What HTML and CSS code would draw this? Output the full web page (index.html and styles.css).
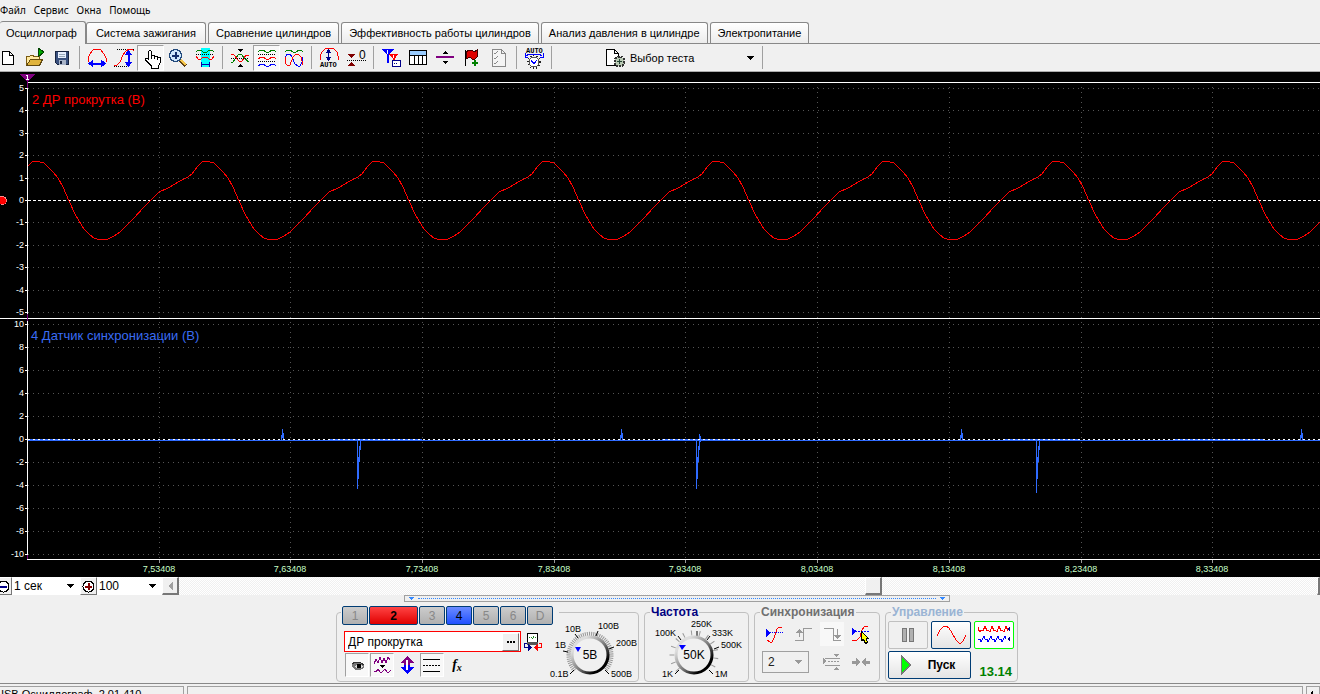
FILE: index.html
```html
<!DOCTYPE html>
<html lang="ru">
<head>
<meta charset="utf-8">
<title>USB Осциллограф</title>
<link rel="stylesheet" href="styles.css">
</head>
<body>
<div class="app">
  <nav class="menu">
    <button>Файл</button><button>Сервис</button><button>Окна</button><button>Помощь</button>
  </nav>

  <div class="tabs" role="tablist">
    <button class="tab active" role="tab" aria-selected="true">Осциллограф</button>
    <button class="tab" role="tab">Система зажигания</button>
    <button class="tab" role="tab">Сравнение цилиндров</button>
    <button class="tab" role="tab">Эффективность работы цилиндров</button>
    <button class="tab" role="tab">Анализ давления в цилиндре</button>
    <button class="tab" role="tab">Электропитание</button>
  </div>

  <div class="toolbar">
    <button class="tool" aria-label="Новый"><svg width="20" height="20"><path d="M4.5 3.5h7l4 4v9h-11zM11.5 3.500v4h4" fill="#fff" stroke="#000"/></svg></button>
    <button class="tool" aria-label="Открыть"><svg width="20" height="20"><path d="M1.500 17V8.500h3l1-1h3v1h6v3" fill="#ffe9a0" stroke="#7a5a10"/><path d="M1.500 17.500l4-6h12l-3 6z" fill="#e0b33c" stroke="#604810"/><path d="M13 0v9l6-5z" fill="#0a0" stroke="#040"/></svg></button>
    <button class="tool" aria-label="Сохранить"><svg width="20" height="20"><path d="M3.500 3.500h13v13h-11l-2-2z" fill="#39507e" stroke="#172440"/><path d="M6 4h8v6H6z" fill="#e8f0ff"/><path d="M7 6h6M7 8h6" stroke="#9ab"/><path d="M7 12h7v5H7z" fill="#a9b4c8"/><path d="M8 13h2v3H8z" fill="#172440"/></svg></button>
    <span class="sep"></span>
    <button class="tool" aria-label="Период"><svg width="20" height="20"><path d="M1 14V10l2-4 3-4 2-1h4l2 1 3 4 2 4v4" fill="none" stroke="red"/><path d="M3 15.500h14" stroke="#00f" stroke-width="2"/><path d="M1 15.500l5-4v8zM19 15.500l-5-4v8z" fill="#00f"/></svg></button>
    <button class="tool" aria-label="Амплитуда"><svg width="20" height="20"><path d="M3 1.500h17M0 18.500h15" stroke="#000" stroke-dasharray="1 1"/><path d="M0 17h3l3-3 3-7 3-4 3-2h3l2 2" fill="none" stroke="red"/><path d="M14.500 5v11" stroke="#00f" stroke-width="2"/><path d="M14.500 2l-4 5h8zM14.500 19l-4-5h8z" fill="#00f"/></svg></button>
    <button class="tool pressed" aria-label="Рука"><svg width="20" height="20"><path d="M7.500 12V3.500l1-1h1l1 1V8l1-1h1l1 1v1l1-1h1l1 1v1l1-1h1l1 1v4l-2 4v2h-7v-2l-6-6v-2h2z" fill="#fff" stroke="#000"/><path d="M10.500 8v3M13.500 9v2M16.500 10v2" stroke="#000"/></svg></button>
    <button class="tool" aria-label="Лупа"><svg width="20" height="20"><path d="M12 12l6 6" stroke="#604010" stroke-width="4"/><path d="M13 12l5 5" stroke="#f5c64a" stroke-width="2"/><circle cx="7.500" cy="7.500" r="6" fill="#cfe8fb" stroke="#234a7c" stroke-width="1.500"/><path d="M4 7.500h7M7.500 4v7" stroke="#13306c" stroke-width="2"/></svg></button>
    <button class="tool" aria-label="Участок"><svg width="20" height="20"><path d="M6 0h9v19H6z" fill="#0ff"/><path d="M1 4l2-2h3l2 2h4l2-2h3l2 2" fill="none" stroke="green"/><path d="M1 6.500h18" stroke="#000" stroke-dasharray="1 1"/><path d="M1 8l2 3h3l2-2h4l2 2h3l2-3" fill="none" stroke="red"/><path d="M6 16.500h9M6.500 14v5M14.500 14v5" stroke="#00a"/></svg></button>
    <span class="sep"></span>
    <button class="tool" aria-label="Совместить"><svg width="20" height="20"><path d="M1 14h2l5-7 3-1 4 5 4 3" fill="none" stroke="green"/><path d="M1 6l3 1 5 6h3l4-6h3" fill="none" stroke="red"/><path d="M1 10.500h18" stroke="#000" stroke-dasharray="1 1"/><path d="M7 1h6l-3 3zM7 19h6l-3-3z"/></svg></button>
    <button class="tool pressed" aria-label="Разделить"><svg width="20" height="20"><g fill="none"><path d="M1 4l2-2h3l3 2h3l3-2h2l2 2" stroke="green"/><path d="M1 11l3-2h2l3 2h3l3-2h2l2 2" stroke="red"/><path d="M1 18l3-2h2l3 2h3l3-2h2l2 2" stroke="#00f"/></g><path d="M1 6.500h18M1 13.500h18" stroke="#000" stroke-dasharray="1 1"/></svg></button>
    <button class="tool" aria-label="Наложить"><svg width="20" height="20"><g fill="none"><path d="M1 4l2-2h3l3 2h3l3-2h2l2 2" stroke="green"/><path d="M1 15v-5l2-4h3l2 3 3 7 3 2h2l2-4v-5" stroke="#00f"/><path d="M1 9v6l2 2h3l3-8 3-3h2l3 3 2 8" stroke="red"/></g></svg></button>
    <span class="sep"></span>
    <button class="tool" aria-label="Автомасштаб"><svg width="20" height="20"><path d="M1 12V8l2-4 3-3 3-1h3l3 1 3 3 1 4v4" fill="none" stroke="red"/><path d="M9.500 3v8" stroke="#008"/><path d="M9.500 1l-3 4h6zM9.500 13l-3-4h6z" fill="#008"/><text class="mini" x="1" y="19">AUTO</text></svg></button>
    <button class="tool" aria-label="Ноль"><svg width="20" height="20"><path d="M2 6h7l-3.500 4zM2 18h7l-3.500-4z" fill="#800000"/><path d="M1 12.500h19" stroke="#000" stroke-dasharray="1 1"/><text class="zero" x="13" y="11">0</text></svg></button>
    <span class="sep"></span>
    <button class="tool" aria-label="Маркеры"><svg width="20" height="20"><path d="M0 1h13l-5 6v8H6V7z" fill="#00f"/><path d="M8 6h9l-3 5v5h-2v-5z" fill="red"/><path d="M6.500 2v4M12.500 7v3" stroke="#fff"/><path d="M11.500 12.500h8v6h-8z" fill="#fff" stroke="#008"/><path d="M13 15.500h4" stroke="#008" stroke-dasharray="1 1"/></svg></button>
    <button class="tool" aria-label="Таблица"><svg width="20" height="20"><path d="M1.500 2.500h17v14h-17z" fill="#fff" stroke="#000"/><path d="M2 3h16v4H2z" fill="#9cf"/><path d="M1 7.500h18M6.500 7v9M10.500 7v9M14.500 7v9" stroke="#000"/></svg></button>
    <button class="tool" aria-label="Линия"><svg width="20" height="20"><path d="M1 9h18" stroke="#800080" stroke-width="2"/><path d="M7 6l3-3 3 3zM7 13l3 3 3-3z"/></svg></button>
    <button class="tool" aria-label="Метка"><svg width="20" height="20"><path d="M3.500 2v16" stroke="#000"/><path d="M4 4l3-2h3l2 2 3-2v7l-2 2h-3l-2-2-4 2z" fill="#e00000" stroke="#400"/><path d="M10 15h6M13 12v6" stroke="green" stroke-width="2"/></svg></button>
    <button class="tool" aria-label="Отчёт"><svg width="20" height="20"><path d="M3.500 1.500h9l4 4v13h-13zM12.500 1.500v4h4" fill="#f4f4f4" stroke="#888"/><path d="M5 5l1 1 3-3M5 10l1 1 3-3M5 15l1 1 3-3" fill="none" stroke="#888"/></svg></button>
    <span class="sep"></span>
    <button class="tool" aria-label="Авто"><svg width="20" height="22"><text class="mini" x="2" y="6">AUTO</text><path d="M2 9l3-2h10l3 2M1 6v4h3M19 6v4h-3" fill="none" stroke="#00f"/><circle cx="10" cy="15" r="6" fill="none" stroke="#222" stroke-width="2" stroke-dasharray="1 2"/><circle cx="10" cy="15" r="5" fill="#fff" stroke="#555"/><path d="M7 13l3 4 3-4" fill="none" stroke="#00f"/></svg></button>
    <span class="sep"></span>
    <button class="test"><svg width="20" height="20"><path d="M.5 1.500h8l4 4v12H.5zM8.500 1.500v4h4" fill="#fff" stroke="#000"/><circle cx="13.500" cy="13.500" r="5" fill="#b9c9b4" stroke="#333" stroke-width="2" stroke-dasharray="2 1"/><path d="M11 13.500h5M13.500 11v5" stroke="#243"/></svg><span>Выбор теста</span><svg class="drop" width="7" height="4"><path d="M0 0h7L3.500 4z"/></svg></button>
    <span class="sep"></span>
  </div>

  <main class="scope">
    <svg class="plot" width="100%" height="505" role="img" aria-label="Осциллограмма">
      <defs>
        <path id="period" d="M28 166L32 162L35 161H39L40 162H43L47 166L53 172L58 178L63 187L69 201L76 216L84 229L90 235L94 238L98 239.500H107L114 236L120 232L133 219L145 206L152 199L159 192L168 188L180 181L188 177L192 174L198 166"/>
        <path id="up" d="M0 438v-9M1 440v-7M-1 440v-5"/>
        <path id="down" d="M0 440v49M1 457v22M2 446v16M3 440v10"/>
      </defs>
      <g transform="translate(0 -72)">
        <g class="grid">
          <path d="M28 88.500h3000M28 110.500h3000M28 133.500h3000M28 155.500h3000M28 178.500h3000M28 222.500h3000M28 245.500h3000M28 267.500h3000M28 290.500h3000M28 312.500h3000"/>
          <path d="M28 324.500h3000M28 347.500h3000M28 370.500h3000M28 393.500h3000M28 416.500h3000M28 462.500h3000M28 485.500h3000M28 508.500h3000M28 531.500h3000M28 554.500h3000"/>
          <path d="M159.500 87v471M290.500 87v471M422.500 87v471M554.500 87v471M685.500 87v471M817.500 87v471M949.500 87v471M1081.500 87v471M1212.500 87v471"/>
        </g>
        <path class="axis" d="M27 82.500h3000M0 318.500h3000M27 559.500h3000M27.500 88v471M25 88.500h3M25 110.500h3M25 133.500h3M25 155.500h3M25 178.500h3M25 200.500h3M25 222.500h3M25 245.500h3M25 267.500h3M25 290.500h3M25 312.500h3M25 324.500h3M25 347.500h3M25 370.500h3M25 393.500h3M25 416.500h3M25 439.500h3M25 462.500h3M25 485.500h3M25 508.500h3M25 531.500h3M25 554.500h3"/>
        <path class="tick" d="M159.500 560v3M290.500 560v3M422.500 560v3M554.500 560v3M685.500 560v3M817.500 560v3M949.500 560v3M1081.500 560v3M1212.500 560v3"/>
        <path class="cursor" d="M27.500 80v8M27.500 314v7M27.500 555v4"/>
        <path d="M20 74h15l-7.500 8z" fill="#800080"/>
        <path d="M26 75.500h1.500v4M26 79.500h3" fill="none" stroke="#fff"/>
        <path class="zero-line" d="M28 200.500h3000"/>
        <g class="wave">
          <use href="#period"/><use href="#period" x="170"/><use href="#period" x="340"/><use href="#period" x="510"/><use href="#period" x="680"/><use href="#period" x="850"/><use href="#period" x="1020"/><use href="#period" x="1190"/>
        </g>
        <circle cx="2.500" cy="200.500" r="4" fill="red" stroke="#f88"/>
        <g class="pulse">
          <path d="M28 440.500h3000M28 439.500h44M170 439.500h66M330 439.500h92M662 439.500h78M1005 439.500h75M1174 439.500h90"/>
          <use href="#up" x="282.500"/><use href="#up" x="621.500"/><use href="#up" x="961.500"/><use href="#up" x="1301.500"/>
          <use href="#down" x="357.500"/><use href="#down" x="696.500"/><use href="#down" x="1036.500"/>
          <path d="M699.500 434v14M700.500 436v6M1036.500 488v5"/>
        </g>
        <path class="zero-line low" d="M28 439.500h3000"/>
        <g class="scale">
          <text x="24" y="91">5</text><text x="24" y="113">4</text><text x="24" y="136">3</text><text x="24" y="158">2</text><text x="24" y="181">1</text><text x="24" y="203">0</text><text x="24" y="225">-1</text><text x="24" y="248">-2</text><text x="24" y="270">-3</text><text x="24" y="293">-4</text><text x="24" y="315">-5</text>
          <text x="24" y="327">10</text><text x="24" y="350">8</text><text x="24" y="373">6</text><text x="24" y="396">4</text><text x="24" y="419">2</text><text x="24" y="442">0</text><text x="24" y="465">-2</text><text x="24" y="488">-4</text><text x="24" y="511">-6</text><text x="24" y="534">-8</text><text x="24" y="557">-10</text>
        </g>
        <g class="times">
          <text x="159" y="572">7,53408</text><text x="290" y="572">7,63408</text><text x="422" y="572">7,73408</text><text x="554" y="572">7,83408</text><text x="685" y="572">7,93408</text><text x="817" y="572">8,03408</text><text x="949" y="572">8,13408</text><text x="1081" y="572">8,23408</text><text x="1212" y="572">8,33408</text>
        </g>
        <text class="name red" x="32" y="104">2 ДР прокрутка (В)</text>
        <text class="name blue" x="31" y="340">4 Датчик синхронизации (В)</text>
      </g>
    </svg>
  </main>

  <div class="zoombar">
    <button class="zoombtn" aria-label="Сжать"><svg width="13" height="13"><circle cx="6.500" cy="6.500" r="5.500" fill="#fff" stroke="#000"/><path d="M3 6.500h7" stroke="#008" stroke-width="2"/></svg></button>
    <span class="combo time"><select aria-label="Развертка"><option>1 сек</option></select><svg width="7" height="4"><path d="M0 0h7L3.500 4z"/></svg></span>
    <button class="zoombtn" aria-label="Растянуть"><svg width="13" height="13"><circle cx="6.500" cy="6.500" r="5.500" fill="#fff" stroke="#000"/><path d="M3 6.500h7M6.500 3v7" stroke="#800000" stroke-width="2"/></svg></button>
    <span class="combo percent"><select aria-label="Масштаб"><option>100</option></select><svg width="7" height="4"><path d="M0 0h7L3.500 4z"/></svg></span>
    <div class="scroll">
      <button class="raised" aria-label="Влево"><svg width="5" height="8"><path d="M5 0v8L0 4z" fill="#a0a0a0"/></svg></button>
      <span class="track before"></span><button class="raised" aria-label="Ползунок"></button><span class="track after"></span>
      <span class="raised end"></span>
    </div>
  </div>

  <div class="dock">
    <button class="splitter" aria-label="Свернуть панель"><svg width="5" height="3"><path d="M0 0h5L2.500 3z"/></svg><span></span><svg width="5" height="3"><path d="M0 0h5L2.500 3z"/></svg></button>

    <div class="groups">
      <fieldset class="group channel">
        <legend class="channels">
          <button>1</button><button class="on red">2</button><button>3</button><button class="on blue">4</button><button>5</button><button>6</button><button>D</button>
        </legend>
        <div class="settings">
          <div class="row">
            <span class="field"><input type="text" value="ДР прокрутка" aria-label="Имя канала"><button aria-label="Выбрать"><svg width="8" height="2"><path d="M0 0h2v2H0zM3 0h2v2H3zM6 0h2v2H6z"/></svg></button></span>
            <button class="flat" aria-label="Сменить прибор"><svg width="18" height="18"><path d="M3.500.5h10v9h-10z" fill="#fff" stroke="#000"/><path d="M3 9h11v3H3z" fill="#555"/><path d="M5 4.500h7M8 6l2-3" stroke="#282" stroke-dasharray="1 1"/><path d="M3 10.500H.500v4H5" fill="none" stroke="#008"/><path d="M4 11v7l4-3.500z" fill="#008"/><path d="M15 10.500h2.500v4H13" fill="none" stroke="red"/><path d="M14 11v7l-4-3.500z" fill="red"/></svg></button>
          </div>
          <div class="row icons">
            <button class="flat pressed" aria-label="Видимость"><svg width="18" height="18"><path d="M4 8l3-2h5l4 3v3l-4 2H7l-3-3z" fill="#777"/><path d="M4 8l3-2h5l4 3" fill="none" stroke="#333"/><path d="M6 11l3-2h5l1 2-3 1H9z" fill="#ddd"/><path d="M9 8h4v4H9z" fill="#000"/></svg></button>
            <button class="flat pressed" aria-label="Фильтр"><svg width="18" height="18"><path d="M1 5v3l2-5 2 4 2-6 2 6 2-5 2 5 2-6 2 3" fill="none" stroke="#800080"/><path d="M6 9h6l-3 3z"/><path d="M1 15l2 1 2-3 2 3h2l3-3 2 3h2l2-2" fill="none" stroke="#800080"/></svg></button>
            <button class="flat" aria-label="Инверсия"><svg width="18" height="18"><path d="M9 0l7 7h-4v2H6V7H2z" fill="#800080"/><path d="M9 18l7-7h-4V9H6v2H2z" fill="#00f"/><path d="M9 4v10" stroke="#fff" stroke-width="2"/></svg></button>
            <button class="flat pressed" aria-label="Уровни"><svg width="18" height="18"><path d="M0 3.500h17M0 15.500h17" stroke="#000"/><path d="M0 9.500h17" stroke="#000" stroke-dasharray="2 1"/></svg></button>
            <button class="flat fx">f<span>x</span></button>
          </div>
        </div>
        <svg class="knob" width="92" height="66">
          <defs><linearGradient id="rim" x1="0" y1="0" x2="1" y2="1"><stop offset=".2" stop-color="#ddd"/><stop offset=".55" stop-color="#777"/><stop offset=".8" stop-color="#000"/></linearGradient></defs>
          <path d="M26 54A21 21 0 1 1 56 54" fill="none" stroke="#999" stroke-width="5" stroke-dasharray="1 1"/>
          <path d="M25 54l-4 4M19 36l-5-1M29 22l-3-4M47 20l2-5M60 33l5-2M56 54l4 4" stroke="#000"/>
          <circle cx="41" cy="39" r="18" fill="#f0f0f0" stroke="url(#rim)" stroke-width="3"/>
          <path d="M26 31h6l-3 5z" fill="#00f"/>
          <text class="value" x="41" y="43">5В</text>
          <text x="1" y="61">0.1В</text><text x="6" y="32">1В</text><text x="16" y="16">10В</text><text x="49" y="13">100В</text><text x="67" y="30">200В</text><text x="62" y="61">500В</text>
        </svg>
      </fieldset>

      <fieldset class="group rate">
        <legend>Частота</legend>
        <svg class="knob" width="100" height="66">
          <path d="M31 54A22 22 0 1 1 63 54" fill="none" stroke="#999" stroke-width="5" stroke-dasharray="1 7"/>
          <path d="M32 54l-4 4M34 24l-3-4M50 20v-5M60 24l3-4M67 33l5-2M62 54l4 4" stroke="#000"/>
          <circle cx="47" cy="39" r="18" fill="#f0f0f0" stroke="url(#rim)" stroke-width="3"/>
          <path d="M32 29h7l-4 5z" fill="#00f"/>
          <text class="value" x="47" y="43">50K</text>
          <text x="15" y="61">1K</text><text x="8" y="20">100K</text><text x="44" y="11">250K</text><text x="65" y="20">333K</text><text x="74" y="32">500K</text><text x="68" y="61">1M</text>
        </svg>
      </fieldset>

      <fieldset class="group sync">
        <legend>Синхронизация</legend>
        <div class="syncgrid">
          <button class="flat" aria-label="Уровень"><svg width="18" height="18"><path d="M2 15l3 2h2l2-4 3-9 2-2h3" fill="none" stroke="red"/><path d="M1 7.500h17" stroke="#00f" stroke-dasharray="1 1"/><path d="M1 4v8l4-4z" fill="#00f"/></svg></button>
          <button class="flat" aria-label="Фронт"><svg width="18" height="18"><path d="M1 15.500h8v-12h9M5.500 12V6" fill="none" stroke="#999"/><path d="M2 8h7L5.500 4z" fill="#999"/></svg></button>
          <button class="flat held" aria-label="Спад"><svg width="18" height="18"><path d="M1 3.500h9v12h8M14.500 4v8" fill="none" stroke="#999"/><path d="M11 10h7l-3.500 4z" fill="#999"/></svg></button>
          <button class="flat" aria-label="Указать"><svg width="18" height="18"><path d="M0 15h5l3-3 2-7 3-4h3" fill="none" stroke="red"/><path d="M0 6.500h18" stroke="#00f" stroke-dasharray="2 1"/><path d="M0 3v7l5-4z" fill="#00f"/><path d="M9.500 6.500v9l2-1 2 4 2-1-1-4h2z" fill="#ff0" stroke="#000"/></svg></button>
          <span class="combo chan"><select aria-label="Канал синхронизации" disabled><option>2</option></select><svg width="7" height="4"><path d="M0 0h7L3.500 4z" fill="#999"/></svg></span>
          <button class="flat" aria-label="Интервал"><svg width="18" height="18"><path d="M0 5v6l4-3zM10 1h7l-3.500 3zM10 17h7l-3.500-3z" fill="#999"/><path d="M2 5.500h15M2 12.500h15" stroke="#999"/><path d="M5 8.500h12" stroke="#999" stroke-dasharray="2 1"/></svg></button>
          <button class="flat" aria-label="К центру"><svg width="18" height="18"><path d="M0 9h4M14 9h4" stroke="#999" stroke-width="3"/><path d="M4 5v8l5-4zM14 5v8l-5-4z" fill="#999"/></svg></button>
        </div>
      </fieldset>

      <fieldset class="group control">
        <legend>Управление</legend>
        <div class="controlgrid">
          <button class="cmd off" aria-label="Пауза"><svg width="12" height="16"><path d="M.5 1.500h4v13h-4zM7.500 1.500h4v13h-4z" fill="#b0b0b0" stroke="#777"/></svg></button>
          <button class="cmd" aria-label="Один кадр"><svg width="30" height="20"><path d="M1 11l3-6 3-3 3-1 3 2 3 5 4 7 3 3h2l2-2 3-6" fill="none" stroke="red"/></svg></button>
          <button class="cmd live" aria-label="Непрерывно"><svg width="34" height="20"><path d="M1 2v2l2 3 1-2 2 1 2-5 2 5 1-1 2 2 2-6 2 5 1-1 2 2 2-6 2 5 1-1 2 2 2-6 2 5" fill="none" stroke="red"/><path d="M1 14h2l1 3 2-4 1-2 1 3h2l1 3 2-4 1-2 1 3h2l1 3 2-4 1-2 1 3h2l1 3 2-4 1-2 1 3" fill="none" stroke="#00f"/><path d="M33 1v6l-3-3zM33 11v6l-3-3z" fill="#008"/></svg></button>
          <button class="cmd start"><svg width="12" height="20"><path d="M1.500 1v18l9-9z" fill="#0f0" stroke="#777"/></svg><span>Пуск</span></button>
          <output>13.14</output>
        </div>
      </fieldset>
    </div>
  </div>

  <footer class="status"><span class="version">USB Осциллограф&nbsp; 2.01.410</span><span class="message"></span><span class="grip"><svg width="3" height="6"><path d="M3 0v6L0 3z"/></svg></span></footer>
</div>
</body>
</html>
```

FILE: styles.css
```css
* { box-sizing: border-box; }
body { margin: 0; background: #f0f0f0; color: #000; font: 12px/14px "Liberation Sans", Arial, sans-serif; }
button, select, input { font: inherit; color: inherit; margin: 0; padding: 0; border: 0; background: none; border-radius: 0; }
svg { display: block; flex: none; shape-rendering: crispEdges; overflow: visible; }
.app { height: 100vh; overflow: hidden; display: flex; flex-direction: column; }
.app > * { flex: none; }

.menu { display: flex; gap: 8px; height: 21px; padding-bottom: 1px; align-items: center; font: 10px/14px "Noto Sans", sans-serif; }

.tabs { display: flex; align-items: flex-end; height: 23px; gap: 2px; border-bottom: 1px solid #888; font-size: 11px; }
.tab { height: 21px; padding: 0 7px; border: 1px solid #888; border-width: 1px 1px 0; border-radius: 3px 3px 0 0; background: linear-gradient(#fff, #ececec); white-space: nowrap; }
.tab.active { height: 23px; margin-bottom: -1px; margin-right: -2px; padding: 0 8px 1px 6px; border-left: 0; background: #f0f0f0; }
.tab:nth-child(2) { padding: 0 9px; }

.toolbar { display: flex; align-items: center; height: 28px; margin-left: -6px; border-bottom: 1px solid #aaa; }
.tool { flex: none; display: flex; justify-content: center; align-items: center; width: 27px; height: 26px; }
.pressed { background: #f8f8f8; border: 1px solid; border-color: #a0a0a0 #fff #fff #a0a0a0; }
.held { background: #f8f8f8; }
.sep { flex: none; width: 8px; height: 23px; background: linear-gradient(#a0a0a0, #a0a0a0) 4px 0 / 1px 100% no-repeat; }
.test { display: flex; align-items: center; width: 203px; height: 26px; padding: 0 4px 0 51px; gap: 4px; font-size: 11px; }
.test .drop { margin-left: auto; }
.mini { font: bold 7px "Liberation Mono", monospace; }
.zero { font: 12px "Liberation Sans", sans-serif; }

.scope { background: #000; overflow: hidden; }
.grid { stroke: #555; stroke-dasharray: 1 4; fill: none; }
.axis { stroke: #fff; fill: none; }
.tick { stroke: #999; }
.cursor { stroke: #800080; }
.zero-line { stroke: #fff; stroke-dasharray: 3 2; }
.zero-line.low { stroke-dasharray: 2 3; }
.wave { stroke: red; fill: none; }
.pulse { stroke: #2f6bff; fill: none; }
.scale, .times { font-size: 9px; }
.scale { fill: #fff; text-anchor: end; }
.times { fill: #c8ffc8; text-anchor: middle; }
.name { font-size: 13px; }
.name.red { fill: red; }
.name.blue { fill: #3a6cf4; }

.zoombar { display: flex; height: 18px; margin-left: -5px; }
.zoombtn, .raised { flex: none; display: flex; align-items: center; justify-content: center; width: 17px; height: 18px; background: #f0f0f0; border: 1px solid; border-color: #fff #777 #777 #fff; }
.combo { display: flex; align-items: center; position: relative; background: #fff; }
.combo select { appearance: none; width: 100%; height: 100%; padding-left: 2px; outline: 0; opacity: 1; }
.combo svg { position: absolute; right: 6px; pointer-events: none; }
.time { width: 68px; }
.percent { width: 65px; }
.scroll { flex: 1; display: flex; background: repeating-conic-gradient(#fff 0 25%, #f0f0f0 0 50%) 0 0 / 2px 2px; }
.raised { border-width: 1px 2px 2px 1px; }
.track.before { flex: 686; }
.track.after { flex: 435; }
.raised.end { width: 2px; }

.dock { display: flex; flex-direction: column; align-items: center; padding-left: 34px; }
.splitter { display: flex; align-items: center; gap: 4px; width: 546px; height: 7px; padding: 0 4px; border: 1px solid #a0a0a0; fill: #38f; }
.splitter span { flex: 1; border-top: 1px dotted #38f; }
.groups { display: flex; gap: 5px; margin-top: 4px; }
.group { margin: 0; min-width: 0; height: 76px; padding: 0; border: 1px solid #c0c0c0; border-radius: 4px; }
.group legend { height: 12px; line-height: 12px; margin-left: 5px; padding: 0 1px; font-weight: bold; }
.channel { display: flex; width: 303px; }
.rate { width: 105px; }
.sync { width: 126px; }
.control { width: 133px; }
.rate legend { color: #000080; }
.sync legend { color: #707070; }
.control legend { color: #9ab4d4; }

.group .channels { display: flex; gap: 1px; height: 12px; width: 218px; margin-left: 4px; font-weight: normal; }
.channels button { width: 26px; height: 19px; flex: none; border: 1px solid #003c74; border-radius: 2px; background: linear-gradient(#ccc, #b0b0b0); color: #888; }
.channels .on { color: #000; }
.channels .red { width: 49px; background: linear-gradient(#f44, #e00000); font-weight: bold; }
.channels .blue { background: linear-gradient(#6c8cff, #2050ff); }
.settings { flex: none; display: flex; flex-direction: column; gap: 1px; width: 212px; padding: 13px 0 0 7px; }
.row { display: flex; align-items: center; }
.field { display: flex; align-items: center; width: 177px; height: 21px; padding: 1px; background: #fff; border: 1px solid red; }
.field input { flex: 1; min-width: 0; padding-left: 2px; outline: 0; }
.field button { display: flex; align-items: center; justify-content: center; width: 17px; height: 18px; background: #f0f0f0; border: 1px solid; border-color: #fff #777 #777 #fff; }
.icons { gap: 1px; padding-left: 1px; }
.flat { display: flex; justify-content: center; align-items: center; width: 24px; height: 24px; }
.field + .flat { height: 21px; }
.fx { font: italic bold 14px "Liberation Serif", serif; }
.fx span { font-size: 10px; padding-top: 4px; }
.knob { margin-top: -2px; font-size: 9px; }
.knob circle, .knob path { shape-rendering: auto; }
.knob .value { font-size: 12px; text-anchor: middle; }
.rate .knob { margin-left: 2px; }

.syncgrid { display: grid; grid-template-columns: repeat(4, 24px); column-gap: 5px; row-gap: 4px; padding: 4px 0 0 7px; align-items: center; }
.chan { grid-column: span 2; width: 47px; height: 22px; border: 1px solid #a0a0a0; background: #f0f0f0; }
.chan select { padding-left: 5px; color: #222; }

.controlgrid { display: grid; grid-template-columns: repeat(3, 40px); gap: 2px 3px; padding: 3px 0 0 2px; }
.cmd { display: flex; justify-content: center; align-items: center; height: 28px; border: 1px solid #003c74; border-radius: 2px; background: linear-gradient(#fff, #e4e4e4); }
.cmd.off { border-color: #c0c0c0; background: #f0f0f0; }
.cmd.live { border-color: #0f0; background: #fff; }
.start { grid-column: span 2; gap: 16px; padding-right: 4px; font-weight: bold; }
output { align-self: end; justify-self: end; padding: 0 2px 0 0; font-size: 13px; font-weight: bold; color: #008000; }

.status { display: flex; gap: 3px; height: 20px; margin-top: 1px; padding-top: 2px; border-top: 1px solid #888; font-size: 11px; }
.status span { border: 1px solid #a0a0a0; border-width: 1px 1px 0 0; white-space: nowrap; }
.version { width: 184px; text-indent: -4px; }
.status .message { flex: 1; border-left-width: 1px; }
.status .grip { width: 14px; padding: 3px; border-left-width: 1px; }
```
